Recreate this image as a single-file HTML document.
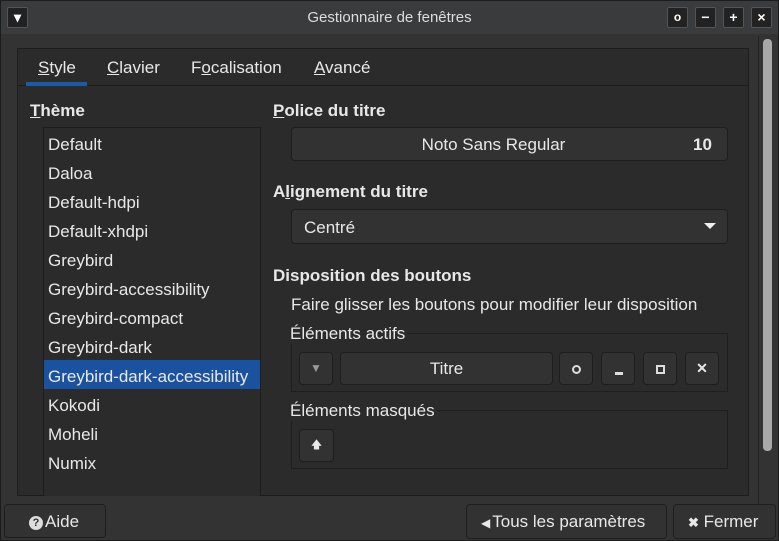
<!DOCTYPE html>
<html><head><meta charset="utf-8"><style>
*{box-sizing:border-box;margin:0;padding:0}
body{width:779px;height:541px;background:#333333;font-family:"Liberation Sans",sans-serif;font-size:17px;color:#e8e8e8;position:relative;overflow:hidden}
.a{position:absolute}
.win{left:0;top:0;width:779px;height:541px;border:1px solid #1c1c1c}
.tb{left:1px;top:1px;width:777px;height:33px;background:#393b3d}
.tbtn{top:7px;width:21px;height:21px;background:#222;border:1px solid #555;border-radius:2px;color:#fff;font-size:14px;font-weight:bold;text-align:center;line-height:19px}
.btn{background:#323232;border:1px solid #1e1e1e;border-radius:4px}
.u{text-decoration:underline}
.row{position:absolute;left:4px;height:29px;line-height:29px}
.b{font-weight:bold}
</style></head><body>
<div class="a win"></div>
<div class="a tb"></div>
<div class="a tbtn" style="left:7px">▾</div>
<div class="a" style="left:0;width:779px;top:9px;text-align:center;font-size:15px;color:#ddd">Gestionnaire de fenêtres</div>
<div class="a tbtn" style="left:667px;font-size:12px">o</div>
<div class="a tbtn" style="left:695px">−</div>
<div class="a tbtn" style="left:723px">+</div>
<div class="a tbtn" style="left:751px">×</div>

<div class="a" style="left:17px;top:48px;width:732px;height:448px;background:#2b2b2b;border:1px solid #1d1d1d"></div>
<div class="a" style="left:18px;top:85px;width:730px;height:1px;background:#1d1d1d"></div>
<div class="a" style="left:26px;top:82px;width:61px;height:4px;background:#1c5aa5"></div>
<div class="a" style="left:38px;top:58px"><span class="u">S</span>tyle</div>
<div class="a" style="left:107px;top:58px"><span class="u">C</span>lavier</div>
<div class="a" style="left:191px;top:58px">F<span class="u">o</span>calisation</div>
<div class="a" style="left:314px;top:58px"><span class="u">A</span>vancé</div>

<div class="a b" style="left:30px;top:101px"><span class="u">T</span>hème</div>
<div class="a" style="left:43px;top:127px;width:218px;height:369px;border:1px solid #1d1d1d;border-bottom:none;background:#2b2b2b">
<div class="row" style="top:2px">Default</div>
<div class="row" style="top:31px">Daloa</div>
<div class="row" style="top:60px">Default-hdpi</div>
<div class="row" style="top:89px">Default-xhdpi</div>
<div class="row" style="top:118px">Greybird</div>
<div class="row" style="top:147px">Greybird-accessibility</div>
<div class="row" style="top:176px">Greybird-compact</div>
<div class="row" style="top:205px">Greybird-dark</div>
<div style="position:absolute;left:0;top:232px;width:216px;height:29px;background:#1a52a0"></div>
<div class="row" style="top:234px">Greybird-dark-accessibility</div>
<div class="row" style="top:263px">Kokodi</div>
<div class="row" style="top:292px">Moheli</div>
<div class="row" style="top:321px">Numix</div>
</div>

<div class="a b" style="left:273px;top:101px"><span class="u">P</span>olice du titre</div>
<div class="a btn" style="left:291px;top:127px;width:437px;height:34px"></div>
<div class="a" style="left:291px;top:135px;width:405px;text-align:center">Noto Sans Regular</div>
<div class="a b" style="left:693px;top:135px">10</div>
<div class="a b" style="left:273px;top:182px">A<span class="u">l</span>ignement du titre</div>
<div class="a btn" style="left:291px;top:209px;width:437px;height:35px"></div>
<div class="a" style="left:304px;top:218px">Centré</div>
<div class="a" style="left:704px;top:223px;width:0;height:0;border-left:6px solid transparent;border-right:6px solid transparent;border-top:6px solid #eee"></div>
<div class="a b" style="left:273px;top:266px">Disposition des boutons</div>
<div class="a" style="left:291px;top:295px">Faire glisser les boutons pour modifier leur disposition</div>
<div class="a" style="left:291px;top:333px;width:437px;height:59px;border:1px solid #1f1f1f"></div>
<div class="a" style="left:290px;top:324px;background:#2b2b2b;padding-right:2px">Éléments actifs</div>
<div class="a btn" style="left:299px;top:352px;width:34px;height:33px;color:#999;text-align:center;line-height:31px;font-size:12px">▼</div>
<div class="a btn" style="left:340px;top:352px;width:213px;height:33px;text-align:center;line-height:31px">Titre</div>
<div class="a btn" style="left:559px;top:352px;width:34px;height:33px"><div class="a" style="left:12px;top:12px;width:9px;height:9px;border:2px solid #ddd;border-radius:50%"></div></div>
<div class="a btn" style="left:601px;top:352px;width:34px;height:33px"><div class="a" style="left:13px;top:19px;width:8px;height:3px;background:#ddd"></div></div>
<div class="a btn" style="left:643px;top:352px;width:34px;height:33px"><div class="a" style="left:12px;top:12px;width:9px;height:9px;border:2px solid #ddd"></div></div>
<div class="a btn" style="left:685px;top:352px;width:34px;height:33px;text-align:center;line-height:31px;font-weight:bold;font-size:14px">✕</div>
<div class="a" style="left:291px;top:410px;width:437px;height:59px;border:1px solid #1f1f1f"></div>
<div class="a" style="left:290px;top:401px;background:#2b2b2b;padding-right:2px">Éléments masqués</div>
<div class="a btn" style="left:299px;top:429px;width:35px;height:33px;text-align:center;line-height:31px;font-size:11px">🡅</div>

<div class="a" style="left:763px;top:39px;width:9px;height:412px;background:#a8a8a8;border-radius:4px"></div>
<div class="a" style="left:758px;top:36px;width:1px;height:470px;background:#222"></div>

<div class="a btn" style="left:4px;top:504px;width:102px;height:34px"></div>
<div class="a" style="left:29px;top:512px"><span style="display:inline-block;width:14px;height:14px;border-radius:50%;background:#ddd;color:#333;font-size:11px;font-weight:bold;text-align:center;line-height:14px;vertical-align:1px;margin-right:2px">?</span>Aide</div>
<div class="a btn" style="left:466px;top:504px;width:201px;height:35px"></div>
<div class="a" style="left:481px;top:512px"><span style="font-size:12px;margin-right:2px">◀</span>Tous les paramètres</div>
<div class="a btn" style="left:673px;top:504px;width:103px;height:35px"></div>
<div class="a" style="left:688px;top:512px"><span style="font-size:13px;font-weight:bold">✖</span> Fermer</div>
</body></html>
